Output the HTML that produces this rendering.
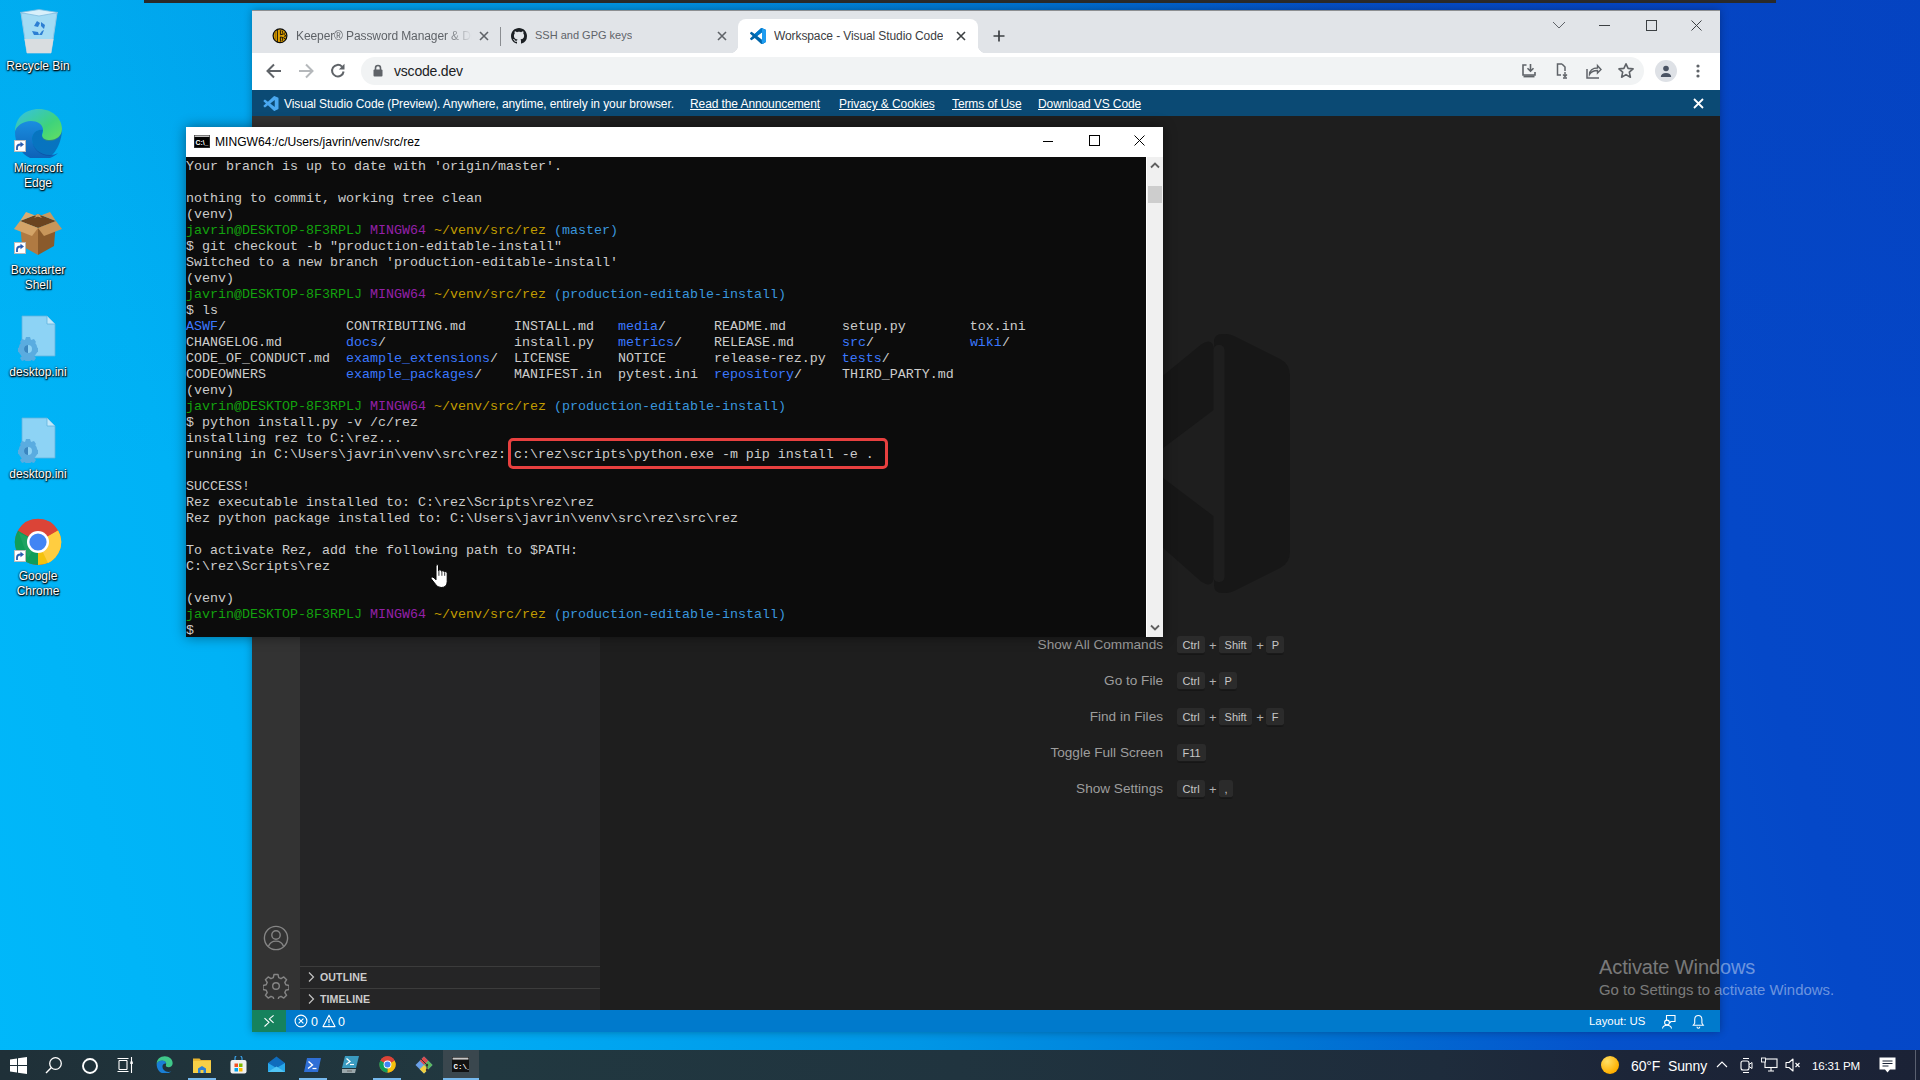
<!DOCTYPE html>
<html><head><meta charset="utf-8">
<style>
*{margin:0;padding:0;box-sizing:border-box}
html,body{width:1920px;height:1080px;overflow:hidden}
body{position:relative;font-family:"Liberation Sans",sans-serif;
background:linear-gradient(180deg,rgba(0,20,80,0.04) 0%,rgba(0,20,80,0) 45%),linear-gradient(75deg,#00b8fa 0%,#00b2f6 15%,#00a8f2 25%,#0096e6 42%,#0076d4 59%,#0552cc 73%,#0548c8 85%,#0545c6 100%);}
.a{position:absolute}
.topbar{left:144px;top:0;width:1632px;height:3px;background:#2a2a2a}
.dl{width:76px;text-align:center;color:#fff;font-size:12px;line-height:16px;text-shadow:0 0 2px #000,0 1px 2px #000,1px 1px 1px rgba(0,0,0,.8)}
.sc{width:12px;height:12px;background:#fff;border:1px solid #bbb}
/* chrome */
#chrome{left:252px;top:10px;width:1468px;height:1022px;background:#1e1e1e;overflow:hidden;box-shadow:0 0 8px rgba(0,0,0,.3)}
.tabstrip{left:0;top:0;width:1468px;height:43px;background:#e1e4e8}
.toolbar{left:0;top:43px;width:1468px;height:37px;background:#fff}
.tabt{white-space:nowrap;overflow:hidden}
.ul{font-size:12px;letter-spacing:-0.1px;text-decoration:underline;color:#fff;white-space:nowrap}
.banner{left:0;top:80px;width:1468px;height:26px;background:#0b4a74;color:#fff;font-size:12.5px}
.actbar{left:0;top:106px;width:48px;height:894px;background:#333333}
.sidebar{left:48px;top:106px;width:300px;height:894px;background:#252526}
.editor{left:348px;top:106px;width:1120px;height:894px;background:#1e1e1e}
.status{left:0;top:1000px;width:1468px;height:22px;background:#007acc;color:#fff;font-size:12px}
.sbh{font-size:10.6px;font-weight:bold;color:#cccccc;letter-spacing:0.1px}
.cmdl{left:0;margin-top:2px;width:563px;text-align:right;font-size:13.6px;color:#9d9d9d;white-space:nowrap}
.keys{left:577px;font-size:11px;color:#cccccc;white-space:nowrap;display:flex;align-items:center}
.keys .k{display:inline-block;height:19px;line-height:18px;padding:0 5.5px;background:#2b2b2b;border-radius:3px;border-bottom:1px solid #161616;box-shadow:inset 0 -1px 0 #1a1a1a;color:#c8c8c8}
.keys i{font-style:normal;color:#b0b0b0;font-size:13px;padding:0 4px;width:14px;text-align:center}
/* terminal */
#term{left:186px;top:127px;width:977px;height:510px;background:#fff;box-shadow:0 0 12px rgba(0,0,0,.45)}
.ttitle{left:0;top:0;width:977px;height:30px;background:#fff;font-size:12px;color:#000}
.tbody{left:0;top:30px;width:960px;height:480px;padding-top:2px;background:#0c0c0c;font-family:"Liberation Mono",monospace;font-size:13.33px;line-height:16px;color:#cccccc;white-space:pre}
.tscroll{left:961px;top:30px;width:16px;height:480px;background:#f0f0f0}
.g{color:#13a10e}.p{color:#9420a8}.y{color:#c19c00}.c{color:#3a96dd}.b{color:#3b78ff}
/* taskbar */
#taskbar{left:0;top:1050px;width:1920px;height:30px;background:linear-gradient(90deg,#1f3038 0%,#213840 25%,#20343f 50%,#1e2c3c 75%,#1c2538 85%,#1b2236 100%)}
</style></head><body>
<div class="a topbar"></div>
<!-- desktop icons -->
<svg class="a" style="left:17px;top:9px" width="44" height="46" viewBox="0 0 44 46"><path d="M4 4L40 4 34 44H10z" fill="#bfe3f5" fill-opacity="0.85"/><path d="M4 4L40 4 34 44H10z" stroke="#8fc6e6" stroke-width="1" fill="none"/><path d="M3 3.5L22 0.5 41 3.5 22 7z" fill="#d8f0fb" stroke="#7fbde0" stroke-width="0.8"/><path d="M7.5 30H36.5L34 44H10z" fill="#d9dde0"/><g fill="#2d7fd3"><path d="M17 17l3-5 3 2-2 4z"/><path d="M24 13l4 3-1 4-3-3z"/><path d="M15 22l2 4h5l-1-3z"/><path d="M27 21l-2 5h-3l3-4z"/></g></svg>
<div class="a dl" style="left:0;top:58px">Recycle Bin</div>
<svg class="a" style="left:13px;top:108px" width="50" height="50" viewBox="0 0 50 50"><defs><linearGradient id="eg1" x1="0" y1="0" x2="1" y2="1"><stop offset="0" stop-color="#36c0e8"/><stop offset="0.6" stop-color="#3ed37c"/><stop offset="1" stop-color="#66e060"/></linearGradient><linearGradient id="eg2" x1="0" y1="0" x2="0" y2="1"><stop offset="0" stop-color="#1a8ee0"/><stop offset="1" stop-color="#0d5fb5"/></linearGradient></defs><path d="M2 24C2 10 12 1 26 1c13 0 23 9 23 20 0 8-6 12-12 12-5 0-8-2-8-5 0-2 1-3 1-5 0-6-6-9-12-9C10 14 3 19 2 24z" fill="url(#eg1)"/><path d="M2 24c1-6 8-11 16-11 6 0 12 3 12 9-6-1-11 3-11 9 0 9 8 16 18 16 3 0 6-1 8-2-4 4-11 7-19 7C13 52 2 40 2 24z" fill="url(#eg2)"/><path d="M19 31c0-6 5-10 11-9 0 2-1 3-1 5 0 3 3 5 8 5 6 0 12-4 12-11 0 15-9 27-12 27-10 0-18-7-18-17z" fill="#0c4d9e" opacity="0.6"/></svg>
<div class="a sc" style="left:14px;top:140px"><svg style="position:absolute;left:0;top:0" width="10" height="10" viewBox="0 0 10 10"><path d="M2 9V6.5Q2 3.5 5.5 3.5H6.5" stroke="#2a5db0" stroke-width="1.8" fill="none"/><path d="M5.5 0.8L9 3.5 5.5 6.2z" fill="#2a5db0"/></svg></div>
<div class="a dl" style="left:0;top:161px;line-height:15px">Microsoft<br>Edge</div>
<svg class="a" style="left:13px;top:210px" width="50" height="46" viewBox="0 0 50 46"><path d="M7 11L25 4 43 11 25 18z" fill="#6b4420"/><path d="M7 11L25 18V45L9 36z" fill="#b07a42"/><path d="M43 11L25 18V45L41 36z" fill="#8a5a2b"/><path d="M7 11L1 19 19 26 25 18z" fill="#d4a468"/><path d="M43 11L49 19 31 26 25 18z" fill="#c8965a"/><path d="M7 11L13 2 29 8 25 4z" fill="#d9ac72"/><path d="M43 11L37 2 21 8 25 4z" fill="#c99a60"/></svg>
<div class="a sc" style="left:14px;top:242px"><svg style="position:absolute;left:0;top:0" width="10" height="10" viewBox="0 0 10 10"><path d="M2 9V6.5Q2 3.5 5.5 3.5H6.5" stroke="#2a5db0" stroke-width="1.8" fill="none"/><path d="M5.5 0.8L9 3.5 5.5 6.2z" fill="#2a5db0"/></svg></div>
<div class="a dl" style="left:0;top:263px;line-height:15px">Boxstarter<br>Shell</div>
<svg class="a" style="left:13px;top:315px" width="44" height="46" viewBox="0 0 44 46"><path d="M9 1H34L42 9V41H9z" fill="#8dd3f5" stroke="#5fb4de" stroke-width="0.8"/><path d="M34 1V9H42" fill="#c2e8fa" stroke="#5fb4de" stroke-width="0.8"/><g transform="translate(15 34)"><circle r="9.5" fill="#5aace0"/><path d="M-2 -12h4l1 3 3-1 2 3-2 2 1 3 3 1v4l-3 1-1 3 2 2-2 3-3-1-1 3h-4l-1-3-3 1-2-3 2-2-1-3-3-1v-4l3-1 1-3-2-2 2-3 3 1z" fill="#5aace0"/><circle r="4" fill="#8dd3f5"/><path d="M-4 0a4 4 0 0 1 4-4v8a4 4 0 0 1-4-4z" fill="#3a86c0"/></g></svg>
<div class="a dl" style="left:0;top:364px">desktop.ini</div>
<svg class="a" style="left:13px;top:417px" width="44" height="46" viewBox="0 0 44 46"><path d="M9 1H34L42 9V41H9z" fill="#8dd3f5" stroke="#5fb4de" stroke-width="0.8"/><path d="M34 1V9H42" fill="#c2e8fa" stroke="#5fb4de" stroke-width="0.8"/><g transform="translate(15 34)"><circle r="9.5" fill="#5aace0"/><path d="M-2 -12h4l1 3 3-1 2 3-2 2 1 3 3 1v4l-3 1-1 3 2 2-2 3-3-1-1 3h-4l-1-3-3 1-2-3 2-2-1-3-3-1v-4l3-1 1-3-2-2 2-3 3 1z" fill="#5aace0"/><circle r="4" fill="#8dd3f5"/><path d="M-4 0a4 4 0 0 1 4-4v8a4 4 0 0 1-4-4z" fill="#3a86c0"/></g></svg>
<div class="a dl" style="left:0;top:466px">desktop.ini</div>
<svg class="a" style="left:14px;top:518px" width="48" height="48" viewBox="0 0 48 48"><circle cx="24" cy="24" r="23" fill="#db4437"/><path d="M24 24L44 12.5A23 23 0 0 1 24 47z" fill="#f4c20d"/><path d="M24 24L24 47A23 23 0 0 1 4 12.5z" fill="#0f9d58"/><path d="M24 24L4 12.5A23 23 0 0 1 44 12.5z" fill="#db4437"/><path d="M24 24L44 12.5A23 23 0 0 1 34 45z" fill="#ffcd40"/><path d="M24 24L14 40 5 15z" fill="#1ea362"/><circle cx="24" cy="24" r="11" fill="#fff"/><circle cx="24" cy="24" r="8.6" fill="#4285f4"/></svg>
<div class="a sc" style="left:14px;top:550px"><svg style="position:absolute;left:0;top:0" width="10" height="10" viewBox="0 0 10 10"><path d="M2 9V6.5Q2 3.5 5.5 3.5H6.5" stroke="#2a5db0" stroke-width="1.8" fill="none"/><path d="M5.5 0.8L9 3.5 5.5 6.2z" fill="#2a5db0"/></svg></div>
<div class="a dl" style="left:0;top:569px;line-height:15px">Google<br>Chrome</div>


<div id="chrome" class="a">
  <div class="a tabstrip">
    <div class="a" style="left:0;top:0;width:1468px;height:1px;background:#8d8f92"></div>
    <!-- tab1 -->
    <svg class="a" style="left:20px;top:18px" width="16" height="16" viewBox="0 0 16 16"><circle cx="8" cy="7.8" r="6.9" fill="#e0a000" stroke="#0a0a0a" stroke-width="1.2"/><path d="M5.4 1.5v12.6M8.4 2.2v4.6M8.4 9v4.6" stroke="#0a0a0a" stroke-width="0.9"/><path d="M8.4 6.8Q11.5 6.6 13.8 4.2M8.4 8.9Q11.5 9.1 13.8 11.5M10 2.6Q11.2 4.6 10.2 5.6M10 13Q11.2 11 10.2 10" stroke="#0a0a0a" stroke-width="0.9" fill="none"/><path d="M12 6.5l2 1.3-2 1.3" stroke="#0a0a0a" stroke-width="0.8" fill="none"/><path d="M3.3 3.8v8" stroke="#9a6e00" stroke-width="1"/></svg>
    <div class="a tabt" style="left:44px;top:19px;width:176px;color:#5f6368;font-size:12px;letter-spacing:-0.1px;-webkit-mask-image:linear-gradient(90deg,#000 85%,transparent 100%)">Keeper® Password Manager &amp; Digital Vault</div>
    <svg class="a" style="left:227px;top:21px" width="10" height="10" viewBox="0 0 10 10"><path d="M1 1L9 9M9 1L1 9" stroke="#5f6368" stroke-width="1.6"/></svg>
    <div class="a" style="left:248px;top:17px;width:1px;height:19px;background:#8a8d91"></div>
    <!-- tab2 -->
    <svg class="a" style="left:259px;top:18px" width="16" height="16" viewBox="0 0 16 16"><path fill="#1b1f23" d="M8 0C3.58 0 0 3.58 0 8c0 3.54 2.29 6.53 5.47 7.59.4.07.55-.17.55-.38 0-.19-.01-.82-.01-1.49-2.01.37-2.53-.49-2.69-.94-.09-.23-.48-.94-.82-1.13-.28-.15-.68-.52-.01-.53.63-.01 1.08.58 1.23.82.72 1.21 1.87.87 2.33.66.07-.52.28-.87.51-1.07-1.78-.2-3.64-.89-3.64-3.95 0-.87.31-1.59.82-2.15-.08-.2-.36-1.02.08-2.12 0 0 .67-.21 2.2.82.64-.18 1.32-.27 2-.27.68 0 1.36.09 2 .27 1.53-1.04 2.2-.82 2.2-.82.44 1.1.16 1.92.08 2.12.51.56.82 1.27.82 2.15 0 3.07-1.87 3.75-3.65 3.95.29.25.54.73.54 1.48 0 1.07-.01 1.93-.01 2.2 0 .21.15.46.55.38A8.013 8.013 0 0016 8c0-4.42-3.58-8-8-8z"/></svg>
    <div class="a tabt" style="left:283px;top:19px;color:#5f6368;font-size:11px;letter-spacing:0px">SSH and GPG keys</div>
    <svg class="a" style="left:465px;top:21px" width="10" height="10" viewBox="0 0 10 10"><path d="M1 1L9 9M9 1L1 9" stroke="#5f6368" stroke-width="1.6"/></svg>
    <!-- active tab -->
    <div class="a" style="left:486px;top:9px;width:240px;height:34px;background:#fff;border-radius:8px 8px 0 0"></div>
    <div class="a" style="left:478px;top:35px;width:8px;height:8px;background:radial-gradient(circle at 0 0,transparent 8px,#fff 8.5px)"></div>
    <div class="a" style="left:726px;top:35px;width:8px;height:8px;background:radial-gradient(circle at 100% 0,transparent 8px,#fff 8.5px)"></div>
    <svg class="a" style="left:498px;top:18px" width="16" height="16" viewBox="0 0 100 100"><path fill="#0065a9" d="M96.5 10.8L75.9.9a6.2 6.2 0 0 0-7.1 1.2L29.4 38 12.2 25a4.1 4.1 0 0 0-5.3.2l-5.5 5a4.1 4.1 0 0 0 0 6.1L16.3 50 1.4 63.6a4.1 4.1 0 0 0 0 6.1l5.5 5a4.1 4.1 0 0 0 5.3.2l17.2-13 39.4 35.9a6.2 6.2 0 0 0 7.1 1.2l20.6-9.9a6.2 6.2 0 0 0 3.5-5.6V16.4a6.2 6.2 0 0 0-3.5-5.6zM75 72.7L45.1 50 75 27.3z"/><path fill="#007acc" d="M96.5 10.8L75.9.9a6.2 6.2 0 0 0-7.1 1.2L29.4 38 45.1 50 75 27.3v45.4l-5.8 4.4 6.7 22a6.2 6.2 0 0 0 7.1-1.2l13.5-9.7a6.2 6.2 0 0 0 3.5-5.6V16.4a6.2 6.2 0 0 0-3.5-5.6z"/><path fill="#1f9cf0" d="M75.9 99.1a6.2 6.2 0 0 1-7.1-1.2c2.3 2.3 6.2.7 6.2-2.6V4.7c0-3.3-3.9-4.9-6.2-2.6a6.2 6.2 0 0 1 7.1-1.2l20.6 9.9A6.2 6.2 0 0 1 100 16.4v67.2a6.2 6.2 0 0 1-3.5 5.6z"/></svg>
    <div class="a tabt" style="left:522px;top:19px;color:#3c4043;font-size:12px;letter-spacing:-0.1px">Workspace - Visual Studio Code</div>
    <svg class="a" style="left:704px;top:21px" width="10" height="10" viewBox="0 0 10 10"><path d="M1 1L9 9M9 1L1 9" stroke="#3c4043" stroke-width="1.6"/></svg>
    <svg class="a" style="left:741px;top:20px" width="12" height="12" viewBox="0 0 12 12"><path d="M6 0.5V11.5M0.5 6H11.5" stroke="#3c4043" stroke-width="1.7"/></svg>
    <!-- window controls -->
    <svg class="a" style="left:1300px;top:11px" width="14" height="8" viewBox="0 0 14 8"><path d="M1 1L7 7L13 1" stroke="#5f6368" stroke-width="1" fill="none"/></svg>
    <div class="a" style="left:1347px;top:15px;width:11px;height:1px;background:#3c4043"></div>
    <div class="a" style="left:1394px;top:10px;width:11px;height:11px;border:1px solid #3c4043"></div>
    <svg class="a" style="left:1439px;top:10px" width="11" height="11" viewBox="0 0 11 11"><path d="M0.5 0.5L10.5 10.5M10.5 0.5L0.5 10.5" stroke="#3c4043" stroke-width="1"/></svg>
  </div>
  <div class="a toolbar">
    <svg class="a" style="left:13px;top:9px" width="18" height="18" viewBox="0 0 18 18"><path d="M16 9H3M9 2.5L2.5 9 9 15.5" stroke="#5f6368" stroke-width="2" fill="none"/></svg>
    <svg class="a" style="left:45px;top:9px" width="18" height="18" viewBox="0 0 18 18"><path d="M2 9H15M9 2.5L15.5 9 9 15.5" stroke="#b5b8bb" stroke-width="2" fill="none"/></svg>
    <svg class="a" style="left:77px;top:9px" width="18" height="18" viewBox="0 0 18 18"><path d="M14.6 9.5A5.8 5.8 0 1 1 13 4.6" stroke="#5f6368" stroke-width="2" fill="none"/><path d="M15.5 1.8V7.5H9.8z" fill="#5f6368"/></svg>
    <div class="a" style="left:109px;top:4px;width:1283px;height:28px;background:#f1f3f4;border-radius:14px"></div>
    <svg class="a" style="left:121px;top:11px" width="10" height="13" viewBox="0 0 10 13"><path d="M2.5 6V4a2.5 2.5 0 0 1 5 0v2" stroke="#5f6368" stroke-width="1.6" fill="none"/><rect x="0.5" y="5.5" width="9" height="7" rx="1" fill="#5f6368"/></svg>
    <div class="a" style="left:142px;top:10px;font-size:14px;color:#202124;letter-spacing:-0.2px">vscode.dev</div>
    <svg class="a" style="left:1268px;top:9px" width="18" height="18" viewBox="0 0 18 18"><path d="M6.5 3H3v10h12v-3" stroke="#5f6368" stroke-width="1.6" fill="none"/><path d="M10.5 2v7M7.5 6.2l3 3 3-3" stroke="#5f6368" stroke-width="1.6" fill="none"/><path d="M3.5 14.5h11" stroke="#5f6368" stroke-width="1.8"/></svg>
    <svg class="a" style="left:1301px;top:9px" width="18" height="18" viewBox="0 0 18 18"><path d="M9 2H4.5v11H8M9 2l3 3v4" stroke="#5f6368" stroke-width="1.5" fill="none"/><path d="M12 10v4M10 12.5l2 2 2-2M10 16h4" stroke="#5f6368" stroke-width="1.4" fill="none"/></svg>
    <svg class="a" style="left:1333px;top:9px" width="18" height="18" viewBox="0 0 18 18"><path d="M2 7v9h12" stroke="#5f6368" stroke-width="1.5" fill="none"/><path d="M4.5 12.5c0-4 3-6.5 8-6.5V3.5L16 7.5 12.5 11V8.5c-4 0-6.5 1.3-8 4z" stroke="#5f6368" stroke-width="1.4" fill="none"/></svg>
    <svg class="a" style="left:1365px;top:9px" width="18" height="18" viewBox="0 0 18 18"><path d="M9 1.8l2.1 4.6 5 .5-3.8 3.3 1.1 5-4.4-2.6-4.4 2.6 1.1-5L1.9 6.9l5-.5z" stroke="#5f6368" stroke-width="1.6" fill="none" stroke-linejoin="round"/></svg>
    <div class="a" style="left:1403px;top:7px;width:22px;height:22px;border-radius:50%;background:#dee1e6"></div>
    <svg class="a" style="left:1405px;top:9px" width="18" height="18" viewBox="0 0 18 18"><circle cx="9" cy="6.5" r="2.8" fill="#4a5363"/><path d="M3.8 15c0-2.6 2.3-4 5.2-4s5.2 1.4 5.2 4z" fill="#4a5363"/></svg>
    <svg class="a" style="left:1440px;top:9px" width="12" height="18" viewBox="0 0 12 18"><circle cx="6" cy="4" r="1.6" fill="#5f6368"/><circle cx="6" cy="9" r="1.6" fill="#5f6368"/><circle cx="6" cy="14" r="1.6" fill="#5f6368"/></svg>
  </div>
  <div class="a banner">
    <svg class="a" style="left:11px;top:6px" width="16" height="15" viewBox="0 0 100 100"><path fill="#4aa8f0" d="M96.5 10.8L75.9.9a6.2 6.2 0 0 0-7.1 1.2L29.4 38 12.2 25a4.1 4.1 0 0 0-5.3.2l-5.5 5a4.1 4.1 0 0 0 0 6.1L16.3 50 1.4 63.6a4.1 4.1 0 0 0 0 6.1l5.5 5a4.1 4.1 0 0 0 5.3.2l17.2-13 39.4 35.9a6.2 6.2 0 0 0 7.1 1.2l20.6-9.9a6.2 6.2 0 0 0 3.5-5.6V16.4a6.2 6.2 0 0 0-3.5-5.6zM75 72.7L45.1 50 75 27.3z"/></svg>
    <div class="a" style="left:32px;top:7px;font-size:12px;letter-spacing:-0.1px">Visual Studio Code (Preview). Anywhere, anytime, entirely in your browser.</div>
    <div class="a ul" style="left:438px;top:7px">Read the Announcement</div>
    <div class="a ul" style="left:587px;top:7px">Privacy &amp; Cookies</div>
    <div class="a ul" style="left:700px;top:7px">Terms of Use</div>
    <div class="a ul" style="left:786px;top:7px">Download VS Code</div>
    <svg class="a" style="left:1441px;top:8px" width="11" height="11" viewBox="0 0 11 11"><path d="M1 1L10 10M10 1L1 10" stroke="#fff" stroke-width="1.8"/></svg>
  </div>
  <div class="a actbar">
    <svg class="a" style="left:11px;top:809px" width="26" height="26" viewBox="0 0 26 26"><circle cx="13" cy="13" r="11.6" stroke="#858585" stroke-width="1.4" fill="none"/><circle cx="13" cy="10" r="4.2" stroke="#858585" stroke-width="1.4" fill="none"/><path d="M5.5 21.3c1.2-3.6 4-5.2 7.5-5.2s6.3 1.6 7.5 5.2" stroke="#858585" stroke-width="1.4" fill="none"/></svg>
    <svg class="a" style="left:11px;top:857px" width="26" height="26" viewBox="0 0 26 26"><path d="M11 1.5h4l.7 3.2 2.3 1 2.8-1.8 2.8 2.8-1.8 2.8 1 2.3 3.2.7v4l-3.2.7-1 2.3 1.8 2.8-2.8 2.8-2.8-1.8-2.3 1-.7 3.2h-4l-.7-3.2-2.3-1-2.8 1.8-2.8-2.8 1.8-2.8-1-2.3-3.2-.7v-4l3.2-.7 1-2.3-1.8-2.8 2.8-2.8 2.8 1.8 2.3-1z" stroke="#858585" stroke-width="1.4" fill="none" stroke-linejoin="round"/><circle cx="13" cy="13" r="3.3" stroke="#858585" stroke-width="1.4" fill="none"/></svg>
  </div>
  <div class="a sidebar">
    <div class="a" style="left:0;top:850px;width:300px;height:1px;background:#3c3c3c"></div>
    <svg class="a" style="left:7px;top:855px" width="8" height="12" viewBox="0 0 8 12"><path d="M2 1.5L6.5 6 2 10.5" stroke="#c5c5c5" stroke-width="1.2" fill="none"/></svg>
    <div class="a sbh" style="left:20px;top:855px">OUTLINE</div>
    <div class="a" style="left:0;top:872px;width:300px;height:1px;background:#3c3c3c"></div>
    <svg class="a" style="left:7px;top:877px" width="8" height="12" viewBox="0 0 8 12"><path d="M2 1.5L6.5 6 2 10.5" stroke="#c5c5c5" stroke-width="1.2" fill="none"/></svg>
    <div class="a sbh" style="left:20px;top:877px">TIMELINE</div>
  </div>
  <div class="a editor">
    <svg class="a" style="left:540px;top:204px" width="160" height="290" viewBox="1140 320 160 290"><g fill="#171717"><path d="M1214 342Q1214 334 1222 334L1226 334Q1230 334 1234 336L1280 359Q1290 364 1290 376V551Q1290 563 1280 568L1234 591Q1230 593 1226 593L1222 593Q1214 593 1214 585z"/><path d="M1140 394.5L1201 344.5Q1214 336 1214 352V409.7L1140 465.6z"/><path d="M1140 460.6L1214 516.4V574Q1214 590 1201 581.6L1140 527.4z"/></g><rect x="1213.5" y="345" width="11" height="237" rx="5" fill="#1e1e1e"/></svg>
    <div class="a cmdl" style="top:519px">Show All Commands</div>
    <div class="a keys" style="top:520px"><span class="k">Ctrl</span><i>+</i><span class="k">Shift</span><i>+</i><span class="k">P</span></div>
    <div class="a cmdl" style="top:555px">Go to File</div>
    <div class="a keys" style="top:556px"><span class="k">Ctrl</span><i>+</i><span class="k">P</span></div>
    <div class="a cmdl" style="top:591px">Find in Files</div>
    <div class="a keys" style="top:592px"><span class="k">Ctrl</span><i>+</i><span class="k">Shift</span><i>+</i><span class="k">F</span></div>
    <div class="a cmdl" style="top:627px">Toggle Full Screen</div>
    <div class="a keys" style="top:628px"><span class="k">F11</span></div>
    <div class="a cmdl" style="top:663px">Show Settings</div>
    <div class="a keys" style="top:664px"><span class="k">Ctrl</span><i>+</i><span class="k">,</span></div>
  </div>
  <div class="a status">
    <div class="a" style="left:0;top:0;width:34px;height:22px;background:#16825d"></div>
    <svg class="a" style="left:0;top:0" width="34" height="22" viewBox="0 0 34 22"><path d="M12.5 8.2L17 12.3 12.5 16.5M21.6 5.3L17.4 8.9 21.6 12.8" stroke="#fff" stroke-width="1.1" fill="none"/></svg>
    <svg class="a" style="left:42px;top:4px" width="14" height="14" viewBox="0 0 14 14"><circle cx="7" cy="7" r="5.9" stroke="#fff" stroke-width="1.1" fill="none"/><path d="M4.6 4.6l4.8 4.8M9.4 4.6l-4.8 4.8" stroke="#fff" stroke-width="1.1"/></svg>
    <div class="a" style="left:59px;top:5px;font-size:12.5px">0</div>
    <svg class="a" style="left:70px;top:4px" width="14" height="14" viewBox="0 0 14 14"><path d="M7 1.2L13 12.6H1z" stroke="#fff" stroke-width="1.1" fill="none" stroke-linejoin="round"/><path d="M7 5v4M7 10.2v1.2" stroke="#fff" stroke-width="1.2"/></svg>
    <div class="a" style="left:86px;top:5px;font-size:12.5px">0</div>
    <div class="a" style="left:1337px;top:5px;font-size:11.4px">Layout: US</div>
    <svg class="a" style="left:1408px;top:4px" width="16" height="15" viewBox="0 0 16 15"><path d="M6.5 6.5V1.5H15V7.5H11L9.5 9" stroke="#fff" stroke-width="1.1" fill="none"/><circle cx="7" cy="8.5" r="2.4" stroke="#fff" stroke-width="1.1" fill="none"/><path d="M2.5 14.5Q3 11.3 7 11.3Q11 11.3 11.5 14.5" stroke="#fff" stroke-width="1.1" fill="none"/></svg>
    <svg class="a" style="left:1440px;top:4px" width="13" height="15" viewBox="0 0 13 15"><path d="M6.3 1.5c-2.3 0-3.6 1.8-3.6 4.2v3.5L1.3 11.2h10l-1.4-2V5.7c0-2.4-1.3-4.2-3.6-4.2zM5 12.8a1.4 1.4 0 0 0 2.8 0" stroke="#fff" stroke-width="1.1" fill="none"/></svg>
  </div>
</div>

<div id="term" class="a">
  <div class="a ttitle">
    <svg class="a" style="left:8px;top:8px" width="16" height="13" viewBox="0 0 16 13"><rect x="0" y="0" width="16" height="13" fill="#3a3a3a"/><rect x="0.7" y="2" width="14.6" height="10.3" fill="#000"/><rect x="0.7" y="0.6" width="14.6" height="1.2" fill="#e0e0e0"/><text x="1.5" y="10" font-family="Liberation Sans" font-size="6.8" font-weight="bold" fill="#fff">C:\_</text></svg>
    <div class="a" style="left:29px;top:8px;font-size:12.1px;color:#000;white-space:nowrap">MINGW64:/c/Users/javrin/venv/src/rez</div>
    <div class="a" style="left:857px;top:14px;width:10px;height:1px;background:#000"></div>
    <div class="a" style="left:903px;top:8px;width:11px;height:11px;border:1px solid #000"></div>
    <svg class="a" style="left:948px;top:8px" width="11" height="11" viewBox="0 0 11 11"><path d="M0.5 0.5L10.5 10.5M10.5 0.5L0.5 10.5" stroke="#000" stroke-width="1"/></svg>
  </div>
  <div class="a tbody">Your branch is up to date with 'origin/master'.

nothing to commit, working tree clean
(venv)
<span class="g">javrin@DESKTOP-8F3RPLJ</span> <span class="p">MINGW64</span> <span class="y">~/venv/src/rez</span> <span class="c">(master)</span>
$ git checkout -b "production-editable-install"
Switched to a new branch 'production-editable-install'
(venv)
<span class="g">javrin@DESKTOP-8F3RPLJ</span> <span class="p">MINGW64</span> <span class="y">~/venv/src/rez</span> <span class="c">(production-editable-install)</span>
$ ls
<span class="b">ASWF</span>/               CONTRIBUTING.md      INSTALL.md   <span class="b">media</span>/      README.md       setup.py        tox.ini
CHANGELOG.md        <span class="b">docs</span>/                install.py   <span class="b">metrics</span>/    RELEASE.md      <span class="b">src</span>/            <span class="b">wiki</span>/
CODE_OF_CONDUCT.md  <span class="b">example_extensions</span>/  LICENSE      NOTICE      release-rez.py  <span class="b">tests</span>/
CODEOWNERS          <span class="b">example_packages</span>/    MANIFEST.in  pytest.ini  <span class="b">repository</span>/     THIRD_PARTY.md
(venv)
<span class="g">javrin@DESKTOP-8F3RPLJ</span> <span class="p">MINGW64</span> <span class="y">~/venv/src/rez</span> <span class="c">(production-editable-install)</span>
$ python install.py -v /c/rez
installing rez to C:\rez...
running in C:\Users\javrin\venv\src\rez: c:\rez\scripts\python.exe -m pip install -e .

SUCCESS!
Rez executable installed to: C:\rez\Scripts\rez\rez
Rez python package installed to: C:\Users\javrin\venv\src\rez\src\rez

To activate Rez, add the following path to $PATH:
C:\rez\Scripts\rez

(venv)
<span class="g">javrin@DESKTOP-8F3RPLJ</span> <span class="p">MINGW64</span> <span class="y">~/venv/src/rez</span> <span class="c">(production-editable-install)</span>
$</div>
  <div class="a tscroll">
    <svg class="a" style="left:3px;top:5px" width="10" height="7" viewBox="0 0 10 7"><path d="M1 5.5L5 1.5l4 4" stroke="#606060" stroke-width="1.8" fill="none"/></svg>
    <div class="a" style="left:1px;top:29px;width:14px;height:17px;background:#cdcdcd"></div>
    <svg class="a" style="left:3px;top:467px" width="10" height="7" viewBox="0 0 10 7"><path d="M1 1.5L5 5.5l4-4" stroke="#606060" stroke-width="1.8" fill="none"/></svg>
  </div>
  <div class="a" style="left:322px;top:311px;width:380px;height:31px;border:3.6px solid #e8403f;border-radius:5px"></div>
</div>

<svg class="a" style="left:428px;top:562px" width="22" height="28" viewBox="0 0 22 28"><path d="M8 4Q8 2.6 9.25 2.6Q10.5 2.6 10.5 4V8.8Q11 7.8 12 7.8Q13.5 7.8 13.5 9.3Q14 8.8 15 8.8Q16.3 8.8 16.5 10Q17 9.6 17.8 9.6Q19.2 9.6 19.2 11.2V19.5Q19.2 25.5 13.2 25.5Q9.5 25.5 7.5 22.3L3.2 16.8Q2.6 15.6 3.8 15.1Q4.8 14.8 6 15.8L8 17.8z" fill="#fff" stroke="#000" stroke-width="1"/><path d="M10.9 9V13.8M13.9 9.6V13.8M16.7 10.4V13.8" stroke="#000" stroke-width="0.8"/></svg>
<div id="taskbar" class="a">
  <svg class="a" style="left:10px;top:7px" width="17" height="17" viewBox="0 0 17 17"><path d="M0 2.4L7 1.4V8H0zM8 1.2L17 0V8H8zM0 9H7V15.6L0 14.6zM8 9H17V17L8 15.8z" fill="#fff"/></svg>
  <svg class="a" style="left:45px;top:6px" width="18" height="18" viewBox="0 0 18 18"><circle cx="10.5" cy="7.5" r="5.8" stroke="#fff" stroke-width="1.3" fill="none"/><path d="M6.4 11.6L1 17" stroke="#fff" stroke-width="1.4"/></svg>
  <svg class="a" style="left:81px;top:7px" width="18" height="18" viewBox="0 0 18 18"><circle cx="9" cy="9" r="7" stroke="#fff" stroke-width="1.9" fill="none"/></svg>
  <svg class="a" style="left:117px;top:6px" width="18" height="18" viewBox="0 0 18 18"><path d="M0.5 2.5h11M0.5 15.5h11M2 4.5v9M10 4.5v9M2 4.5h8M2 13.5h8M14.5 1v16" stroke="#fff" stroke-width="1.1" fill="none"/><rect x="13.3" y="5.5" width="2.5" height="2.5" fill="#fff"/></svg>
  <svg class="a" style="left:156px;top:6px" width="17" height="17" viewBox="0 0 50 50"><path d="M2 24C2 10 12 1 26 1c13 0 23 9 23 20 0 8-6 12-12 12-5 0-8-2-8-5 0-2 1-3 1-5 0-6-6-9-12-9C10 14 3 19 2 24z" fill="#3fc88a"/><path d="M2 24c1-6 8-11 16-11 6 0 12 3 12 9-6-1-11 3-11 9 0 9 8 16 18 16 3 0 6-1 8-2-4 4-11 7-19 7C13 52 2 40 2 24z" fill="#1a7fd6"/></svg>
  <svg class="a" style="left:193px;top:7px" width="18" height="16" viewBox="0 0 18 16"><path d="M0 1.5h6.5l1.5 1.5H18V6H0z" fill="#e8b530"/><rect x="0" y="4" width="18" height="12" rx="0.5" fill="#f6cf47"/><path d="M5 16v-4.5L9 9l4 2.5V16h-2.5v-3h-3v3z" fill="#2b7fd4"/></svg>
  <svg class="a" style="left:230px;top:6px" width="17" height="18" viewBox="0 0 17 18"><path d="M5 4V2.5a3.5 3.5 0 0 1 7 0V4" stroke="#3aa0e6" stroke-width="1.2" fill="none"/><rect x="0.5" y="4" width="16" height="13.5" rx="2" fill="#f0f0f0"/><rect x="4.5" y="7.5" width="3.5" height="3.5" fill="#f25022"/><rect x="9" y="7.5" width="3.5" height="3.5" fill="#7fba00"/><rect x="4.5" y="12" width="3.5" height="3.5" fill="#00a4ef"/><rect x="9" y="12" width="3.5" height="3.5" fill="#ffb900"/></svg>
  <svg class="a" style="left:268px;top:6px" width="17" height="17" viewBox="0 0 17 17"><path d="M0 7L8.5 0.5 17 7V16H0z" fill="#0f6cbd"/><path d="M0 7L8.5 12 17 7V16H0z" fill="#28a8ea"/><path d="M0 16L8.5 10.5 17 16z" fill="#50c5f5"/></svg>
  <svg class="a" style="left:304px;top:8px" width="17" height="14" viewBox="0 0 17 14"><path d="M3 0H17L14 14H0z" fill="#2f6fd6"/><path d="M4.5 3.5L8.5 7 4 10.5" stroke="#fff" stroke-width="1.4" fill="none"/><path d="M8.5 10.5h4" stroke="#fff" stroke-width="1.2"/></svg>
  <svg class="a" style="left:342px;top:6px" width="17" height="18" viewBox="0 0 17 18"><path d="M3 0H17L14 12H0z" fill="#3a9bc0"/><path d="M4.5 2.5L8 5.5 4 8.5" stroke="#fff" stroke-width="1.3" fill="none"/><path d="M8 8.5h4" stroke="#fff" stroke-width="1.1"/><path d="M0 13H14L13 17H0z" fill="#9aa7ab"/><path d="M5 15h5" stroke="#555" stroke-width="0.8"/></svg>
  <svg class="a" style="left:379px;top:6px" width="17" height="17" viewBox="0 0 48 48"><circle cx="24" cy="24" r="23" fill="#db4437"/><path d="M24 24L44 12.5A23 23 0 0 1 24 47z" fill="#f4c20d"/><path d="M24 24L24 47A23 23 0 0 1 4 12.5z" fill="#0f9d58"/><path d="M24 24L4 12.5A23 23 0 0 1 44 12.5z" fill="#db4437"/><circle cx="24" cy="24" r="11" fill="#fff"/><circle cx="24" cy="24" r="8.6" fill="#4285f4"/></svg>
  <svg class="a" style="left:415px;top:6px" width="18" height="18" viewBox="0 0 18 18"><path d="M9 0.5L17.5 9 9 17.5 0.5 9z" fill="#6aa0e8"/><path d="M9 0.5L13.25 4.75 9 9 4.75 4.75z" fill="#d94c4c"/><path d="M13.25 4.75L17.5 9 13.25 13.25 9 9z" fill="#5cb85c"/><path d="M9 9L13.25 13.25 9 17.5 4.75 13.25z" fill="#f0d040"/><path d="M6 3l6 6v5" stroke="#333" stroke-width="1" fill="none"/><circle cx="12" cy="9" r="1.2" fill="#333"/><circle cx="12" cy="14" r="1.2" fill="#333"/></svg>
  <div class="a" style="left:443px;top:0;width:36px;height:30px;background:#3a474e"></div>
  <svg class="a" style="left:452px;top:7px" width="17" height="15" viewBox="0 0 17 15"><rect x="0" y="0" width="17" height="15" fill="#111"/><rect x="0.6" y="0.6" width="15.8" height="2" fill="#c8c8c8"/><text x="1.6" y="11.6" font-family="Liberation Mono" font-size="7.5" font-weight="bold" fill="#fff">C:\_</text></svg>
  <div class="a" style="left:188px;top:28px;width:28px;height:2px;background:#76b9ed"></div>
  <div class="a" style="left:299px;top:28px;width:28px;height:2px;background:#76b9ed"></div>
  <div class="a" style="left:373px;top:28px;width:28px;height:2px;background:#76b9ed"></div>
  <div class="a" style="left:443px;top:28px;width:36px;height:2px;background:#76b9ed"></div>
  <!-- tray -->
  <div class="a" style="left:1601px;top:6px;width:18px;height:18px;border-radius:50%;background:radial-gradient(circle at 35% 30%,#ffe066,#ffb000 70%,#f08a00)"></div>
  <div class="a" style="left:1631px;top:8px;font-size:14px;color:#fff;white-space:nowrap;letter-spacing:-0.1px">60°F&nbsp; Sunny</div>
  <svg class="a" style="left:1716px;top:10px" width="12" height="8" viewBox="0 0 12 8"><path d="M1 7L6 2l5 5" stroke="#fff" stroke-width="1.1" fill="none"/></svg>
  <svg class="a" style="left:1740px;top:7px" width="13" height="17" viewBox="0 0 13 17"><path d="M3 1.5h6M3 15.5h6" stroke="#fff" stroke-width="1"/><rect x="1" y="4" width="8" height="9" rx="2" stroke="#fff" stroke-width="1.1" fill="none"/><path d="M9 7.5l3-2v6l-3-2" stroke="#fff" stroke-width="1" fill="none"/></svg>
  <svg class="a" style="left:1761px;top:7px" width="17" height="15" viewBox="0 0 17 15"><rect x="4" y="2" width="12" height="8.5" stroke="#fff" stroke-width="1.1" fill="none"/><path d="M10 10.5v3M7 14h6" stroke="#fff" stroke-width="1.1"/><rect x="0.5" y="1" width="4" height="4" fill="#1b2437" stroke="#fff" stroke-width="0.9"/></svg>
  <svg class="a" style="left:1785px;top:8px" width="16" height="14" viewBox="0 0 16 14"><path d="M1 4.5h3L8 1v12L4 9.5H1z" stroke="#fff" stroke-width="1.1" fill="none" stroke-linejoin="round"/><path d="M10.5 5l4 4M14.5 5l-4 4" stroke="#fff" stroke-width="1.1"/></svg>
  <div class="a" style="left:1812px;top:9px;font-size:11.6px;color:#fff;white-space:nowrap;letter-spacing:-0.2px">16:31 PM</div>
  <svg class="a" style="left:1879px;top:7px" width="17" height="17" viewBox="0 0 17 17"><path d="M0.5 0.5h16v12H11l-2.5 3-2.5-3H0.5z" fill="#fff"/><path d="M3.5 4h10M3.5 6.5h10M3.5 9h6" stroke="#1b2437" stroke-width="1"/></svg>
  <div class="a" style="left:1915px;top:0;width:1px;height:30px;background:#5a6070"></div>
</div>
<div class="a" style="left:1599px;top:956px;font-size:20px;color:rgba(255,255,255,0.42);white-space:nowrap;letter-spacing:-0.1px">Activate Windows</div>
<div class="a" style="left:1599px;top:982px;font-size:14.9px;color:rgba(255,255,255,0.42);white-space:nowrap">Go to Settings to activate Windows.</div>
</body></html>
